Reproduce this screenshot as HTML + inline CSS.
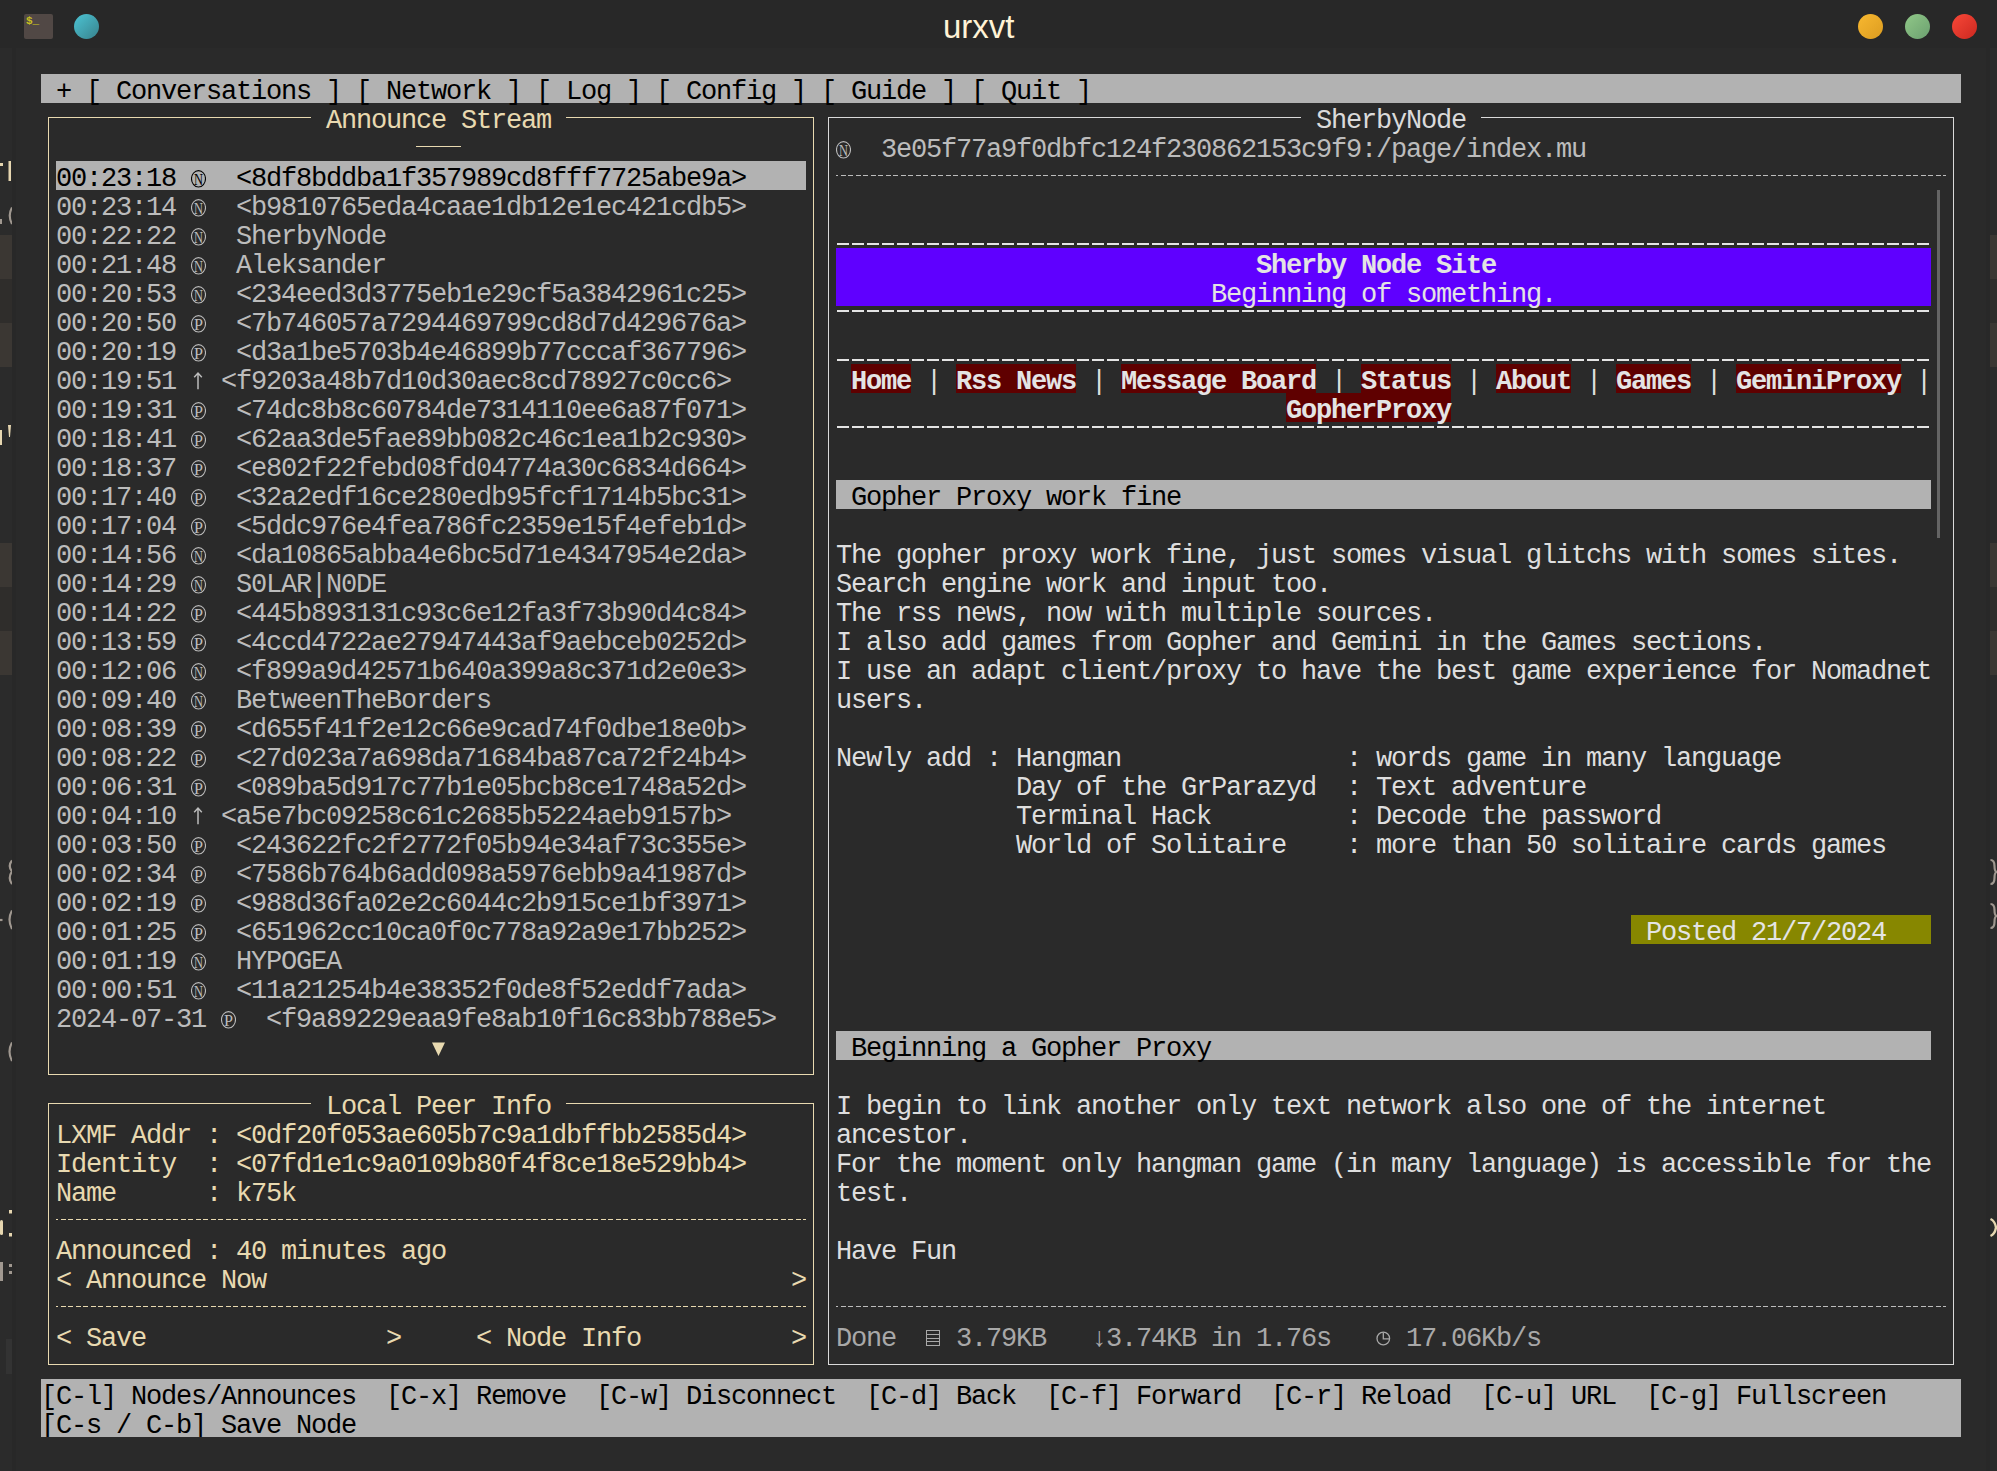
<!DOCTYPE html>
<html><head><meta charset="utf-8"><title>urxvt</title>
<style>
html,body{margin:0;padding:0;}
body{width:1997px;height:1471px;background:#282828;position:relative;overflow:hidden;font-family:"Liberation Mono",monospace;}
.b{position:absolute;}
.t{position:absolute;white-space:pre;font-size:27px;line-height:29px;letter-spacing:-1.2026px;}
#win{position:absolute;left:16px;top:48px;width:1970px;height:1423px;background:#2a2a2a;}
#title{position:absolute;left:943px;top:-1px;font-family:"Liberation Sans",sans-serif;font-size:33px;line-height:56px;color:#fff3d6;}
</style></head><body>
<div id="win"></div>
<div id="title">urxvt</div>
<div class="b" style="left:0;top:48px;width:12px;height:1423px;background:#2b2b2b;overflow:hidden">
 <div class="b" style="left:0;top:187px;width:12px;height:44px;background:#3b3733"></div>
 <div class="b" style="left:0;top:231px;width:12px;height:44px;background:#2f2d2b"></div>
 <div class="b" style="left:0;top:275px;width:12px;height:44px;background:#3b3733"></div>
 <div class="b" style="left:0;top:495px;width:12px;height:44px;background:#3b3733"></div>
 <div class="b" style="left:0;top:539px;width:12px;height:44px;background:#2f2d2b"></div>
 <div class="b" style="left:0;top:583px;width:12px;height:44px;background:#3b3733"></div>
</div>
<svg class="b" style="left:0;top:0" width="12" height="1471" viewBox="0 0 12 1471">
 <g fill="#e6d6b0"><rect x="0" y="163" width="3" height="3"/><rect x="8.5" y="161" width="2.5" height="20"/>
 <rect x="0" y="430" width="2" height="15"/><path d="M8 425 H11 L10 437 H9 Z"/>
 <rect x="9" y="1210" width="3" height="3.5"/><rect x="9" y="1233" width="3" height="3.5"/><rect x="0" y="1220" width="3" height="15" rx="1.5"/></g>
 <g fill="none" stroke="#a09890" stroke-width="2.2">
 <path d="M12 207.5 Q7.5 215.5 12 224"/>
 <path d="M12 860.5 Q7.5 866 12 871.5 Q7.5 878 12 884"/>
 <path d="M12 910.5 Q7 919.5 12 929"/><path d="M0 920 H2.5"/>
 <path d="M12 1042.5 Q7 1051.5 12 1061"/></g>
 <g fill="#a09890"><rect x="0" y="219" width="2" height="5"/><rect x="0" y="1262" width="3" height="19"/><rect x="9" y="1264" width="3" height="3"/><rect x="9" y="1271" width="3" height="3"/></g>
 <rect x="6" y="1339" width="6" height="35" fill="#333333"/>
</svg>
<div class="b" style="left:1990px;top:48px;width:7px;height:1423px;background:#2b2b2b;overflow:hidden">
 <div class="b" style="left:0;top:187px;width:7px;height:44px;background:#3b3733"></div>
 <div class="b" style="left:0;top:231px;width:7px;height:44px;background:#2f2d2b"></div>
 <div class="b" style="left:0;top:275px;width:7px;height:44px;background:#3b3733"></div>
 <div class="b" style="left:0;top:495px;width:7px;height:44px;background:#3b3733"></div>
 <div class="b" style="left:0;top:539px;width:7px;height:44px;background:#2f2d2b"></div>
 <div class="b" style="left:0;top:583px;width:7px;height:44px;background:#3b3733"></div>
</div>
<svg class="b" style="left:1990px;top:0" width="7" height="1471" viewBox="0 0 7 1471">
 <g fill="none" stroke="#a09890" stroke-width="2.2">
 <path d="M0.5 860 Q4.5 860 4.5 866 Q4.5 872 7 872 M0.5 884 Q4.5 884 4.5 878 Q4.5 872 7 872"/>
 <path d="M0.5 904 Q4.5 904 4.5 910 Q4.5 916 7 916 M0.5 928 Q4.5 928 4.5 922 Q4.5 916 7 916"/></g>
 <path d="M0.5 1219 Q5 1221 6 1227.5 Q5 1234 0.5 1236" fill="none" stroke="#e6d6b0" stroke-width="2.4"/>
</svg>
<div class="b" style="left:24px;top:14px;width:29px;height:25px;background:#514845;border-radius:2px"></div>
<div class="b" style="left:26px;top:14px;font-family:'Liberation Mono';font-size:11px;line-height:14px;color:#c8c020;font-weight:bold">$_</div>
<div class="b" style="left:74px;top:14px;width:25px;height:25px;border-radius:50%;background:linear-gradient(135deg,#4cc4d4,#38828c)"></div>
<div class="b" style="left:1858px;top:14px;width:25px;height:25px;border-radius:50%;background:linear-gradient(135deg,#f8b830,#dc9c20)"></div>
<div class="b" style="left:1905px;top:14px;width:25px;height:25px;border-radius:50%;background:linear-gradient(135deg,#90c888,#6ca070)"></div>
<div class="b" style="left:1952px;top:14px;width:25px;height:25px;border-radius:50%;background:linear-gradient(135deg,#f84838,#cc2820)"></div>
<div class="b" style="left:41px;top:74px;width:1920px;height:29px;background:#b2b2b2"></div>
<div class="t" style="left:41px;top:77.6px;color:#000000;"> + [ Conversations ] [ Network ] [ Log ] [ Config ] [ Guide ] [ Quit ]</div>
<div class="b" style="left:48px;top:117px;width:263px;height:1px;background:#e8d9b0"></div>
<div class="b" style="left:566px;top:117px;width:248px;height:1px;background:#e8d9b0"></div>
<div class="b" style="left:48px;top:1074px;width:766px;height:1px;background:#e8d9b0"></div>
<div class="b" style="left:48px;top:117px;width:1px;height:958px;background:#e8d9b0"></div>
<div class="b" style="left:813px;top:117px;width:1px;height:958px;background:#e8d9b0"></div>
<div class="t" style="left:326px;top:106.6px;color:#e8d9b0;">Announce Stream</div>
<div class="b" style="left:416px;top:146px;width:45px;height:1px;background:#e8d9b0"></div>
<div class="b" style="left:56px;top:161px;width:750px;height:29px;background:#b2b2b2"></div>
<div class="t" style="left:56px;top:164.6px;color:#000000;">00:23:18</div>
<svg class="b" style="left:191px;top:161px" width="15" height="29" viewBox="0 0 15 29"><ellipse cx="7.5" cy="17.8" rx="7" ry="8.2" fill="none" stroke="#000000" stroke-width="1.1"/><text x="3" y="23.8" font-family="Liberation Serif" font-size="16.5" textLength="9" lengthAdjust="spacingAndGlyphs" fill="#000000">N</text></svg>
<div class="t" style="left:236px;top:164.6px;color:#000000;">&lt;8df8bddba1f357989cd8fff7725abe9a&gt;</div>
<div class="t" style="left:56px;top:193.6px;color:#bcbcbc;">00:23:14</div>
<svg class="b" style="left:191px;top:190px" width="15" height="29" viewBox="0 0 15 29"><ellipse cx="7.5" cy="17.8" rx="7" ry="8.2" fill="none" stroke="#bcbcbc" stroke-width="1.1"/><text x="3" y="23.8" font-family="Liberation Serif" font-size="16.5" textLength="9" lengthAdjust="spacingAndGlyphs" fill="#bcbcbc">N</text></svg>
<div class="t" style="left:236px;top:193.6px;color:#bcbcbc;">&lt;b9810765eda4caae1db12e1ec421cdb5&gt;</div>
<div class="t" style="left:56px;top:222.6px;color:#bcbcbc;">00:22:22</div>
<svg class="b" style="left:191px;top:219px" width="15" height="29" viewBox="0 0 15 29"><ellipse cx="7.5" cy="17.8" rx="7" ry="8.2" fill="none" stroke="#bcbcbc" stroke-width="1.1"/><text x="3" y="23.8" font-family="Liberation Serif" font-size="16.5" textLength="9" lengthAdjust="spacingAndGlyphs" fill="#bcbcbc">N</text></svg>
<div class="t" style="left:236px;top:222.6px;color:#bcbcbc;">SherbyNode</div>
<div class="t" style="left:56px;top:251.6px;color:#bcbcbc;">00:21:48</div>
<svg class="b" style="left:191px;top:248px" width="15" height="29" viewBox="0 0 15 29"><ellipse cx="7.5" cy="17.8" rx="7" ry="8.2" fill="none" stroke="#bcbcbc" stroke-width="1.1"/><text x="3" y="23.8" font-family="Liberation Serif" font-size="16.5" textLength="9" lengthAdjust="spacingAndGlyphs" fill="#bcbcbc">N</text></svg>
<div class="t" style="left:236px;top:251.6px;color:#bcbcbc;">Aleksander</div>
<div class="t" style="left:56px;top:280.6px;color:#bcbcbc;">00:20:53</div>
<svg class="b" style="left:191px;top:277px" width="15" height="29" viewBox="0 0 15 29"><ellipse cx="7.5" cy="17.8" rx="7" ry="8.2" fill="none" stroke="#bcbcbc" stroke-width="1.1"/><text x="3" y="23.8" font-family="Liberation Serif" font-size="16.5" textLength="9" lengthAdjust="spacingAndGlyphs" fill="#bcbcbc">N</text></svg>
<div class="t" style="left:236px;top:280.6px;color:#bcbcbc;">&lt;234eed3d3775eb1e29cf5a3842961c25&gt;</div>
<div class="t" style="left:56px;top:309.6px;color:#bcbcbc;">00:20:50</div>
<svg class="b" style="left:191px;top:306px" width="15" height="29" viewBox="0 0 15 29"><ellipse cx="7.5" cy="17.8" rx="7" ry="8.2" fill="none" stroke="#bcbcbc" stroke-width="1.1"/><text x="3" y="23.8" font-family="Liberation Serif" font-size="16.5" textLength="9" lengthAdjust="spacingAndGlyphs" fill="#bcbcbc">P</text></svg>
<div class="t" style="left:236px;top:309.6px;color:#bcbcbc;">&lt;7b746057a7294469799cd8d7d429676a&gt;</div>
<div class="t" style="left:56px;top:338.6px;color:#bcbcbc;">00:20:19</div>
<svg class="b" style="left:191px;top:335px" width="15" height="29" viewBox="0 0 15 29"><ellipse cx="7.5" cy="17.8" rx="7" ry="8.2" fill="none" stroke="#bcbcbc" stroke-width="1.1"/><text x="3" y="23.8" font-family="Liberation Serif" font-size="16.5" textLength="9" lengthAdjust="spacingAndGlyphs" fill="#bcbcbc">P</text></svg>
<div class="t" style="left:236px;top:338.6px;color:#bcbcbc;">&lt;d3a1be5703b4e46899b77cccaf367796&gt;</div>
<div class="t" style="left:56px;top:367.6px;color:#bcbcbc;">00:19:51</div>
<svg class="b" style="left:191px;top:364px" width="15" height="29" viewBox="0 0 15 29"><path d="M7 9 V25.2 M3.2 13.2 L7 9 L10.8 13.2" fill="none" stroke="#bcbcbc" stroke-width="1.5"/></svg>
<div class="t" style="left:221px;top:367.6px;color:#bcbcbc;">&lt;f9203a48b7d10d30aec8cd78927c0cc6&gt;</div>
<div class="t" style="left:56px;top:396.6px;color:#bcbcbc;">00:19:31</div>
<svg class="b" style="left:191px;top:393px" width="15" height="29" viewBox="0 0 15 29"><ellipse cx="7.5" cy="17.8" rx="7" ry="8.2" fill="none" stroke="#bcbcbc" stroke-width="1.1"/><text x="3" y="23.8" font-family="Liberation Serif" font-size="16.5" textLength="9" lengthAdjust="spacingAndGlyphs" fill="#bcbcbc">P</text></svg>
<div class="t" style="left:236px;top:396.6px;color:#bcbcbc;">&lt;74dc8b8c60784de7314110ee6a87f071&gt;</div>
<div class="t" style="left:56px;top:425.6px;color:#bcbcbc;">00:18:41</div>
<svg class="b" style="left:191px;top:422px" width="15" height="29" viewBox="0 0 15 29"><ellipse cx="7.5" cy="17.8" rx="7" ry="8.2" fill="none" stroke="#bcbcbc" stroke-width="1.1"/><text x="3" y="23.8" font-family="Liberation Serif" font-size="16.5" textLength="9" lengthAdjust="spacingAndGlyphs" fill="#bcbcbc">P</text></svg>
<div class="t" style="left:236px;top:425.6px;color:#bcbcbc;">&lt;62aa3de5fae89bb082c46c1ea1b2c930&gt;</div>
<div class="t" style="left:56px;top:454.6px;color:#bcbcbc;">00:18:37</div>
<svg class="b" style="left:191px;top:451px" width="15" height="29" viewBox="0 0 15 29"><ellipse cx="7.5" cy="17.8" rx="7" ry="8.2" fill="none" stroke="#bcbcbc" stroke-width="1.1"/><text x="3" y="23.8" font-family="Liberation Serif" font-size="16.5" textLength="9" lengthAdjust="spacingAndGlyphs" fill="#bcbcbc">P</text></svg>
<div class="t" style="left:236px;top:454.6px;color:#bcbcbc;">&lt;e802f22febd08fd04774a30c6834d664&gt;</div>
<div class="t" style="left:56px;top:483.6px;color:#bcbcbc;">00:17:40</div>
<svg class="b" style="left:191px;top:480px" width="15" height="29" viewBox="0 0 15 29"><ellipse cx="7.5" cy="17.8" rx="7" ry="8.2" fill="none" stroke="#bcbcbc" stroke-width="1.1"/><text x="3" y="23.8" font-family="Liberation Serif" font-size="16.5" textLength="9" lengthAdjust="spacingAndGlyphs" fill="#bcbcbc">P</text></svg>
<div class="t" style="left:236px;top:483.6px;color:#bcbcbc;">&lt;32a2edf16ce280edb95fcf1714b5bc31&gt;</div>
<div class="t" style="left:56px;top:512.6px;color:#bcbcbc;">00:17:04</div>
<svg class="b" style="left:191px;top:509px" width="15" height="29" viewBox="0 0 15 29"><ellipse cx="7.5" cy="17.8" rx="7" ry="8.2" fill="none" stroke="#bcbcbc" stroke-width="1.1"/><text x="3" y="23.8" font-family="Liberation Serif" font-size="16.5" textLength="9" lengthAdjust="spacingAndGlyphs" fill="#bcbcbc">P</text></svg>
<div class="t" style="left:236px;top:512.6px;color:#bcbcbc;">&lt;5ddc976e4fea786fc2359e15f4efeb1d&gt;</div>
<div class="t" style="left:56px;top:541.6px;color:#bcbcbc;">00:14:56</div>
<svg class="b" style="left:191px;top:538px" width="15" height="29" viewBox="0 0 15 29"><ellipse cx="7.5" cy="17.8" rx="7" ry="8.2" fill="none" stroke="#bcbcbc" stroke-width="1.1"/><text x="3" y="23.8" font-family="Liberation Serif" font-size="16.5" textLength="9" lengthAdjust="spacingAndGlyphs" fill="#bcbcbc">N</text></svg>
<div class="t" style="left:236px;top:541.6px;color:#bcbcbc;">&lt;da10865abba4e6bc5d71e4347954e2da&gt;</div>
<div class="t" style="left:56px;top:570.6px;color:#bcbcbc;">00:14:29</div>
<svg class="b" style="left:191px;top:567px" width="15" height="29" viewBox="0 0 15 29"><ellipse cx="7.5" cy="17.8" rx="7" ry="8.2" fill="none" stroke="#bcbcbc" stroke-width="1.1"/><text x="3" y="23.8" font-family="Liberation Serif" font-size="16.5" textLength="9" lengthAdjust="spacingAndGlyphs" fill="#bcbcbc">N</text></svg>
<div class="t" style="left:236px;top:570.6px;color:#bcbcbc;">S0LAR|N0DE</div>
<div class="t" style="left:56px;top:599.6px;color:#bcbcbc;">00:14:22</div>
<svg class="b" style="left:191px;top:596px" width="15" height="29" viewBox="0 0 15 29"><ellipse cx="7.5" cy="17.8" rx="7" ry="8.2" fill="none" stroke="#bcbcbc" stroke-width="1.1"/><text x="3" y="23.8" font-family="Liberation Serif" font-size="16.5" textLength="9" lengthAdjust="spacingAndGlyphs" fill="#bcbcbc">P</text></svg>
<div class="t" style="left:236px;top:599.6px;color:#bcbcbc;">&lt;445b893131c93c6e12fa3f73b90d4c84&gt;</div>
<div class="t" style="left:56px;top:628.6px;color:#bcbcbc;">00:13:59</div>
<svg class="b" style="left:191px;top:625px" width="15" height="29" viewBox="0 0 15 29"><ellipse cx="7.5" cy="17.8" rx="7" ry="8.2" fill="none" stroke="#bcbcbc" stroke-width="1.1"/><text x="3" y="23.8" font-family="Liberation Serif" font-size="16.5" textLength="9" lengthAdjust="spacingAndGlyphs" fill="#bcbcbc">P</text></svg>
<div class="t" style="left:236px;top:628.6px;color:#bcbcbc;">&lt;4ccd4722ae27947443af9aebceb0252d&gt;</div>
<div class="t" style="left:56px;top:657.6px;color:#bcbcbc;">00:12:06</div>
<svg class="b" style="left:191px;top:654px" width="15" height="29" viewBox="0 0 15 29"><ellipse cx="7.5" cy="17.8" rx="7" ry="8.2" fill="none" stroke="#bcbcbc" stroke-width="1.1"/><text x="3" y="23.8" font-family="Liberation Serif" font-size="16.5" textLength="9" lengthAdjust="spacingAndGlyphs" fill="#bcbcbc">N</text></svg>
<div class="t" style="left:236px;top:657.6px;color:#bcbcbc;">&lt;f899a9d42571b640a399a8c371d2e0e3&gt;</div>
<div class="t" style="left:56px;top:686.6px;color:#bcbcbc;">00:09:40</div>
<svg class="b" style="left:191px;top:683px" width="15" height="29" viewBox="0 0 15 29"><ellipse cx="7.5" cy="17.8" rx="7" ry="8.2" fill="none" stroke="#bcbcbc" stroke-width="1.1"/><text x="3" y="23.8" font-family="Liberation Serif" font-size="16.5" textLength="9" lengthAdjust="spacingAndGlyphs" fill="#bcbcbc">N</text></svg>
<div class="t" style="left:236px;top:686.6px;color:#bcbcbc;">BetweenTheBorders</div>
<div class="t" style="left:56px;top:715.6px;color:#bcbcbc;">00:08:39</div>
<svg class="b" style="left:191px;top:712px" width="15" height="29" viewBox="0 0 15 29"><ellipse cx="7.5" cy="17.8" rx="7" ry="8.2" fill="none" stroke="#bcbcbc" stroke-width="1.1"/><text x="3" y="23.8" font-family="Liberation Serif" font-size="16.5" textLength="9" lengthAdjust="spacingAndGlyphs" fill="#bcbcbc">P</text></svg>
<div class="t" style="left:236px;top:715.6px;color:#bcbcbc;">&lt;d655f41f2e12c66e9cad74f0dbe18e0b&gt;</div>
<div class="t" style="left:56px;top:744.6px;color:#bcbcbc;">00:08:22</div>
<svg class="b" style="left:191px;top:741px" width="15" height="29" viewBox="0 0 15 29"><ellipse cx="7.5" cy="17.8" rx="7" ry="8.2" fill="none" stroke="#bcbcbc" stroke-width="1.1"/><text x="3" y="23.8" font-family="Liberation Serif" font-size="16.5" textLength="9" lengthAdjust="spacingAndGlyphs" fill="#bcbcbc">P</text></svg>
<div class="t" style="left:236px;top:744.6px;color:#bcbcbc;">&lt;27d023a7a698da71684ba87ca72f24b4&gt;</div>
<div class="t" style="left:56px;top:773.6px;color:#bcbcbc;">00:06:31</div>
<svg class="b" style="left:191px;top:770px" width="15" height="29" viewBox="0 0 15 29"><ellipse cx="7.5" cy="17.8" rx="7" ry="8.2" fill="none" stroke="#bcbcbc" stroke-width="1.1"/><text x="3" y="23.8" font-family="Liberation Serif" font-size="16.5" textLength="9" lengthAdjust="spacingAndGlyphs" fill="#bcbcbc">P</text></svg>
<div class="t" style="left:236px;top:773.6px;color:#bcbcbc;">&lt;089ba5d917c77b1e05bcb8ce1748a52d&gt;</div>
<div class="t" style="left:56px;top:802.6px;color:#bcbcbc;">00:04:10</div>
<svg class="b" style="left:191px;top:799px" width="15" height="29" viewBox="0 0 15 29"><path d="M7 9 V25.2 M3.2 13.2 L7 9 L10.8 13.2" fill="none" stroke="#bcbcbc" stroke-width="1.5"/></svg>
<div class="t" style="left:221px;top:802.6px;color:#bcbcbc;">&lt;a5e7bc09258c61c2685b5224aeb9157b&gt;</div>
<div class="t" style="left:56px;top:831.6px;color:#bcbcbc;">00:03:50</div>
<svg class="b" style="left:191px;top:828px" width="15" height="29" viewBox="0 0 15 29"><ellipse cx="7.5" cy="17.8" rx="7" ry="8.2" fill="none" stroke="#bcbcbc" stroke-width="1.1"/><text x="3" y="23.8" font-family="Liberation Serif" font-size="16.5" textLength="9" lengthAdjust="spacingAndGlyphs" fill="#bcbcbc">P</text></svg>
<div class="t" style="left:236px;top:831.6px;color:#bcbcbc;">&lt;243622fc2f2772f05b94e34af73c355e&gt;</div>
<div class="t" style="left:56px;top:860.6px;color:#bcbcbc;">00:02:34</div>
<svg class="b" style="left:191px;top:857px" width="15" height="29" viewBox="0 0 15 29"><ellipse cx="7.5" cy="17.8" rx="7" ry="8.2" fill="none" stroke="#bcbcbc" stroke-width="1.1"/><text x="3" y="23.8" font-family="Liberation Serif" font-size="16.5" textLength="9" lengthAdjust="spacingAndGlyphs" fill="#bcbcbc">P</text></svg>
<div class="t" style="left:236px;top:860.6px;color:#bcbcbc;">&lt;7586b764b6add098a5976ebb9a41987d&gt;</div>
<div class="t" style="left:56px;top:889.6px;color:#bcbcbc;">00:02:19</div>
<svg class="b" style="left:191px;top:886px" width="15" height="29" viewBox="0 0 15 29"><ellipse cx="7.5" cy="17.8" rx="7" ry="8.2" fill="none" stroke="#bcbcbc" stroke-width="1.1"/><text x="3" y="23.8" font-family="Liberation Serif" font-size="16.5" textLength="9" lengthAdjust="spacingAndGlyphs" fill="#bcbcbc">P</text></svg>
<div class="t" style="left:236px;top:889.6px;color:#bcbcbc;">&lt;988d36fa02e2c6044c2b915ce1bf3971&gt;</div>
<div class="t" style="left:56px;top:918.6px;color:#bcbcbc;">00:01:25</div>
<svg class="b" style="left:191px;top:915px" width="15" height="29" viewBox="0 0 15 29"><ellipse cx="7.5" cy="17.8" rx="7" ry="8.2" fill="none" stroke="#bcbcbc" stroke-width="1.1"/><text x="3" y="23.8" font-family="Liberation Serif" font-size="16.5" textLength="9" lengthAdjust="spacingAndGlyphs" fill="#bcbcbc">P</text></svg>
<div class="t" style="left:236px;top:918.6px;color:#bcbcbc;">&lt;651962cc10ca0f0c778a92a9e17bb252&gt;</div>
<div class="t" style="left:56px;top:947.6px;color:#bcbcbc;">00:01:19</div>
<svg class="b" style="left:191px;top:944px" width="15" height="29" viewBox="0 0 15 29"><ellipse cx="7.5" cy="17.8" rx="7" ry="8.2" fill="none" stroke="#bcbcbc" stroke-width="1.1"/><text x="3" y="23.8" font-family="Liberation Serif" font-size="16.5" textLength="9" lengthAdjust="spacingAndGlyphs" fill="#bcbcbc">N</text></svg>
<div class="t" style="left:236px;top:947.6px;color:#bcbcbc;">HYPOGEA</div>
<div class="t" style="left:56px;top:976.6px;color:#bcbcbc;">00:00:51</div>
<svg class="b" style="left:191px;top:973px" width="15" height="29" viewBox="0 0 15 29"><ellipse cx="7.5" cy="17.8" rx="7" ry="8.2" fill="none" stroke="#bcbcbc" stroke-width="1.1"/><text x="3" y="23.8" font-family="Liberation Serif" font-size="16.5" textLength="9" lengthAdjust="spacingAndGlyphs" fill="#bcbcbc">N</text></svg>
<div class="t" style="left:236px;top:976.6px;color:#bcbcbc;">&lt;11a21254b4e38352f0de8f52eddf7ada&gt;</div>
<div class="t" style="left:56px;top:1005.6px;color:#bcbcbc;">2024-07-31</div>
<svg class="b" style="left:221px;top:1002px" width="15" height="29" viewBox="0 0 15 29"><ellipse cx="7.5" cy="17.8" rx="7" ry="8.2" fill="none" stroke="#bcbcbc" stroke-width="1.1"/><text x="3" y="23.8" font-family="Liberation Serif" font-size="16.5" textLength="9" lengthAdjust="spacingAndGlyphs" fill="#bcbcbc">P</text></svg>
<div class="t" style="left:266px;top:1005.6px;color:#bcbcbc;">&lt;f9a89229eaa9fe8ab10f16c83bb788e5&gt;</div>
<svg class="b" style="left:431px;top:1031px" width="15" height="29" viewBox="0 0 15 29"><path d="M1 11.5 H14 L7.5 25 Z" fill="#e8d9b0"/></svg>
<div class="b" style="left:48px;top:1103px;width:263px;height:1px;background:#e8d9b0"></div>
<div class="b" style="left:566px;top:1103px;width:248px;height:1px;background:#e8d9b0"></div>
<div class="b" style="left:48px;top:1364px;width:766px;height:1px;background:#e8d9b0"></div>
<div class="b" style="left:48px;top:1103px;width:1px;height:262px;background:#e8d9b0"></div>
<div class="b" style="left:813px;top:1103px;width:1px;height:262px;background:#e8d9b0"></div>
<div class="t" style="left:326px;top:1092.6px;color:#e8d9b0;">Local Peer Info</div>
<div class="t" style="left:56px;top:1121.6px;color:#e8d9b0;">LXMF Addr : &lt;0df20f053ae605b7c9a1dbffbb2585d4&gt;</div>
<div class="t" style="left:56px;top:1150.6px;color:#e8d9b0;">Identity  : &lt;07fd1e1c9a0109b80f4f8ce18e529bb4&gt;</div>
<div class="t" style="left:56px;top:1179.6px;color:#e8d9b0;">Name      : k75k</div>
<div class="b" style="left:56px;top:1219px;width:750px;height:1px;background:repeating-linear-gradient(90deg,#e8d9b0 0 5px,transparent 5px 7.5px);background-position:5px 0"></div>
<div class="t" style="left:56px;top:1237.6px;color:#e8d9b0;">Announced : 40 minutes ago</div>
<div class="t" style="left:56px;top:1266.6px;color:#e8d9b0;">&lt; Announce Now</div>
<div class="t" style="left:791px;top:1266.6px;color:#e8d9b0;">&gt;</div>
<div class="b" style="left:56px;top:1306px;width:750px;height:1px;background:repeating-linear-gradient(90deg,#e8d9b0 0 5px,transparent 5px 7.5px);background-position:5px 0"></div>
<div class="t" style="left:56px;top:1324.6px;color:#e8d9b0;">&lt; Save</div>
<div class="t" style="left:386px;top:1324.6px;color:#e8d9b0;">&gt;</div>
<div class="t" style="left:476px;top:1324.6px;color:#e8d9b0;">&lt; Node Info</div>
<div class="t" style="left:791px;top:1324.6px;color:#e8d9b0;">&gt;</div>
<div class="b" style="left:828px;top:117px;width:473px;height:1px;background:#dadada"></div>
<div class="b" style="left:1481px;top:117px;width:473px;height:1px;background:#dadada"></div>
<div class="b" style="left:828px;top:1364px;width:1126px;height:1px;background:#dadada"></div>
<div class="b" style="left:828px;top:117px;width:1px;height:1248px;background:#dadada"></div>
<div class="b" style="left:1953px;top:117px;width:1px;height:1248px;background:#dadada"></div>
<div class="t" style="left:1316px;top:106.6px;color:#dadada;">SherbyNode</div>
<svg class="b" style="left:836px;top:132px" width="15" height="29" viewBox="0 0 15 29"><ellipse cx="7.5" cy="17.8" rx="7" ry="8.2" fill="none" stroke="#bcbcbc" stroke-width="1.1"/><text x="3" y="23.8" font-family="Liberation Serif" font-size="16.5" textLength="9" lengthAdjust="spacingAndGlyphs" fill="#bcbcbc">N</text></svg>
<div class="t" style="left:881px;top:135.6px;color:#bcbcbc;">3e05f77a9f0dbfc124f230862153c9f9:/page/index.mu</div>
<div class="b" style="left:836px;top:175px;width:1110px;height:1px;background:repeating-linear-gradient(90deg,#bcbcbc 0 5px,transparent 5px 7.5px);background-position:5px 0"></div>
<div class="b" style="left:1937px;top:190px;width:3px;height:348px;background:#646464"></div>
<div class="b" style="left:836px;top:243px;width:1095px;height:2px;background:repeating-linear-gradient(90deg,transparent 0 1px,#e4e4e4 1px 13px,transparent 13px 15px)"></div>
<div class="b" style="left:836px;top:248px;width:1095px;height:58px;background:#5f00ff"></div>
<div class="t" style="left:1256px;top:251.6px;color:#e4e4e4; font-weight:bold;">Sherby Node Site</div>
<div class="t" style="left:1211px;top:280.6px;color:#e4e4e4;">Beginning of something.</div>
<div class="b" style="left:836px;top:310px;width:1095px;height:2px;background:repeating-linear-gradient(90deg,transparent 0 1px,#e4e4e4 1px 13px,transparent 13px 15px)"></div>
<div class="b" style="left:836px;top:359px;width:1095px;height:2px;background:repeating-linear-gradient(90deg,transparent 0 1px,#e4e4e4 1px 13px,transparent 13px 15px)"></div>
<div class="b" style="left:851px;top:364px;width:60px;height:29px;background:#5f0000"></div>
<div class="t" style="left:851px;top:367.6px;color:#e4e4e4; font-weight:bold;">Home</div>
<div class="b" style="left:956px;top:364px;width:120px;height:29px;background:#5f0000"></div>
<div class="t" style="left:956px;top:367.6px;color:#e4e4e4; font-weight:bold;">Rss News</div>
<div class="b" style="left:1121px;top:364px;width:195px;height:29px;background:#5f0000"></div>
<div class="t" style="left:1121px;top:367.6px;color:#e4e4e4; font-weight:bold;">Message Board</div>
<div class="b" style="left:1361px;top:364px;width:90px;height:29px;background:#5f0000"></div>
<div class="t" style="left:1361px;top:367.6px;color:#e4e4e4; font-weight:bold;">Status</div>
<div class="b" style="left:1496px;top:364px;width:75px;height:29px;background:#5f0000"></div>
<div class="t" style="left:1496px;top:367.6px;color:#e4e4e4; font-weight:bold;">About</div>
<div class="b" style="left:1616px;top:364px;width:75px;height:29px;background:#5f0000"></div>
<div class="t" style="left:1616px;top:367.6px;color:#e4e4e4; font-weight:bold;">Games</div>
<div class="b" style="left:1736px;top:364px;width:165px;height:29px;background:#5f0000"></div>
<div class="t" style="left:1736px;top:367.6px;color:#e4e4e4; font-weight:bold;">GeminiProxy</div>
<div class="t" style="left:926px;top:367.6px;color:#dedede;">|</div>
<div class="t" style="left:1091px;top:367.6px;color:#dedede;">|</div>
<div class="t" style="left:1331px;top:367.6px;color:#dedede;">|</div>
<div class="t" style="left:1466px;top:367.6px;color:#dedede;">|</div>
<div class="t" style="left:1586px;top:367.6px;color:#dedede;">|</div>
<div class="t" style="left:1706px;top:367.6px;color:#dedede;">|</div>
<div class="t" style="left:1916px;top:367.6px;color:#dedede;">|</div>
<div class="b" style="left:1286px;top:393px;width:165px;height:29px;background:#5f0000"></div>
<div class="t" style="left:1286px;top:396.6px;color:#e4e4e4; font-weight:bold;">GopherProxy</div>
<div class="b" style="left:836px;top:426px;width:1095px;height:2px;background:repeating-linear-gradient(90deg,transparent 0 1px,#e4e4e4 1px 13px,transparent 13px 15px)"></div>
<div class="b" style="left:836px;top:480px;width:1095px;height:29px;background:#b2b2b2"></div>
<div class="t" style="left:851px;top:483.6px;color:#000000;">Gopher Proxy work fine</div>
<div class="t" style="left:836px;top:541.6px;color:#dedede;">The gopher proxy work fine, just somes visual glitchs with somes sites.</div>
<div class="t" style="left:836px;top:570.6px;color:#dedede;">Search engine work and input too.</div>
<div class="t" style="left:836px;top:599.6px;color:#dedede;">The rss news, now with multiple sources.</div>
<div class="t" style="left:836px;top:628.6px;color:#dedede;">I also add games from Gopher and Gemini in the Games sections.</div>
<div class="t" style="left:836px;top:657.6px;color:#dedede;">I use an adapt client/proxy to have the best game experience for Nomadnet</div>
<div class="t" style="left:836px;top:686.6px;color:#dedede;">users.</div>
<div class="t" style="left:836px;top:744.6px;color:#dedede;">Newly add : Hangman               : words game in many language</div>
<div class="t" style="left:836px;top:773.6px;color:#dedede;">            Day of the GrParazyd  : Text adventure</div>
<div class="t" style="left:836px;top:802.6px;color:#dedede;">            Terminal Hack         : Decode the password</div>
<div class="t" style="left:836px;top:831.6px;color:#dedede;">            World of Solitaire    : more than 50 solitaire cards games</div>
<div class="t" style="left:836px;top:1092.6px;color:#dedede;">I begin to link another only text network also one of the internet</div>
<div class="t" style="left:836px;top:1121.6px;color:#dedede;">ancestor.</div>
<div class="t" style="left:836px;top:1150.6px;color:#dedede;">For the moment only hangman game (in many language) is accessible for the</div>
<div class="t" style="left:836px;top:1179.6px;color:#dedede;">test.</div>
<div class="t" style="left:836px;top:1237.6px;color:#dedede;">Have Fun</div>
<div class="b" style="left:1631px;top:915px;width:300px;height:29px;background:#878700"></div>
<div class="t" style="left:1646px;top:918.6px;color:#e4e4e4;">Posted 21/7/2024</div>
<div class="b" style="left:836px;top:1031px;width:1095px;height:29px;background:#b2b2b2"></div>
<div class="t" style="left:851px;top:1034.6px;color:#000000;">Beginning a Gopher Proxy</div>
<div class="b" style="left:836px;top:1306px;width:1110px;height:1px;background:repeating-linear-gradient(90deg,#bcbcbc 0 5px,transparent 5px 7.5px);background-position:5px 0"></div>
<div class="t" style="left:836px;top:1324.6px;color:#a8a8a8;">Done</div>
<div class="t" style="left:956px;top:1324.6px;color:#a8a8a8;">3.79KB</div>
<div class="t" style="left:1091px;top:1324.6px;color:#a8a8a8;">↓3.74KB in 1.76s</div>
<div class="t" style="left:1406px;top:1324.6px;color:#a8a8a8;">17.06Kb/s</div>
<svg class="b" style="left:926px;top:1321px" width="15" height="29" viewBox="0 0 15 29"><rect x="0.5" y="9.5" width="13" height="15" fill="none" stroke="#a8a8a8" stroke-width="1"/><path d="M1 13.5 H13 M1 17.5 H13 M1 20.5 H13" stroke="#a8a8a8" stroke-width="1"/></svg>
<svg class="b" style="left:1376px;top:1321px" width="15" height="29" viewBox="0 0 15 29"><circle cx="7.3" cy="17.5" r="6.3" fill="none" stroke="#a8a8a8" stroke-width="1.3"/><path d="M7.3 11.5 V17.8 H13" fill="none" stroke="#a8a8a8" stroke-width="1.3"/></svg>
<div class="b" style="left:41px;top:1379px;width:1920px;height:58px;background:#b2b2b2"></div>
<div class="t" style="left:41px;top:1382.6px;color:#000000;">[C-l] Nodes/Announces  [C-x] Remove  [C-w] Disconnect  [C-d] Back  [C-f] Forward  [C-r] Reload  [C-u] URL  [C-g] Fullscreen</div>
<div class="b" style="left:41px;top:1408px;width:319px;height:29px;overflow:hidden"><div class="t" style="left:0;top:3.6px;color:#000000;">[C-s / C-b] Save Node</div></div>
</body></html>
